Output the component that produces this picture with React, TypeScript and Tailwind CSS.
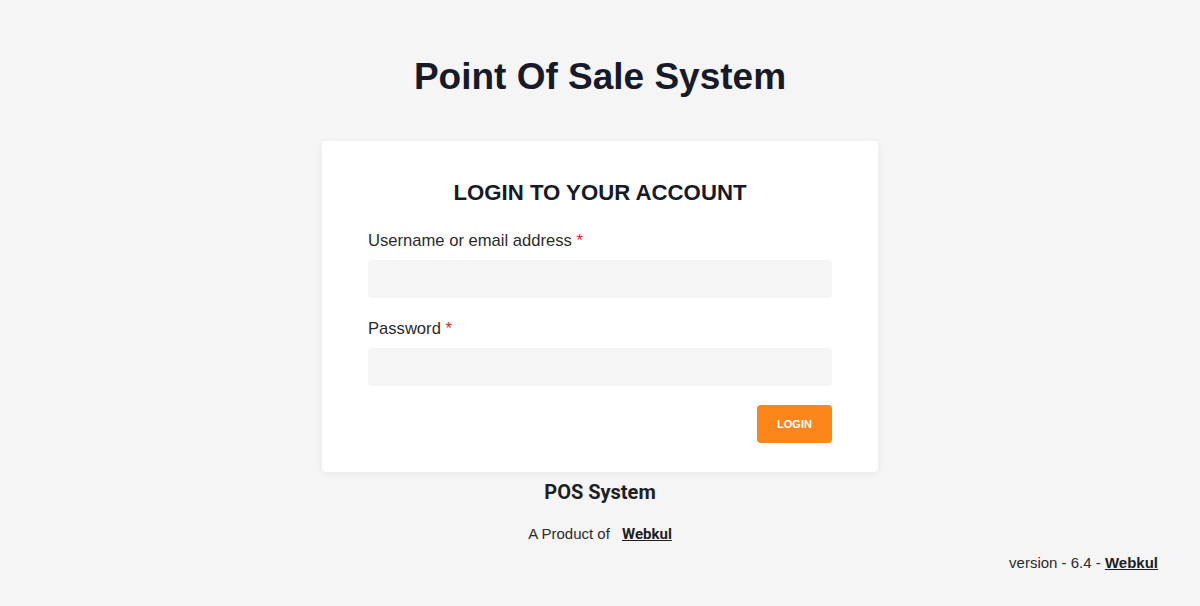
export default function App() {
  return (
    <div className="flex min-h-[606px] w-full flex-col bg-[#f5f5f5] font-['Liberation_Sans',Arial,sans-serif]">
      <div className="flex flex-col items-center">
        <h1 className="mt-[55px] text-[37px] font-bold leading-[44px] text-[#161a29]">
          Point Of Sale System
        </h1>

        <form
          className="mt-[42px] w-[556px] rounded-[4px] bg-white px-[46px] pb-[29px] pt-[38px] shadow-[0_2px_8px_rgba(0,0,0,0.06)]"
          onSubmit={(e) => e.preventDefault()}
        >
          <h2 className="text-center text-[22.2px] font-bold leading-[28px] text-[#161a29]">
            LOGIN TO YOUR ACCOUNT
          </h2>

          <label htmlFor="username" className="mt-[22px] block text-[16.6px] leading-[24px] text-[#2b2b2b]">
            Username or email address <span className="text-[#e02424]">*</span>
          </label>
          <input
            id="username"
            type="text"
            className="mt-[7px] block h-[38px] w-full rounded-[4px] bg-[#f5f5f5] px-3 text-[14px] outline-none"
          />

          <label htmlFor="password" className="mt-[19px] block text-[16.6px] leading-[24px] text-[#2b2b2b]">
            Password <span className="text-[#e02424]">*</span>
          </label>
          <input
            id="password"
            type="password"
            className="mt-[7px] block h-[38px] w-full rounded-[4px] bg-[#f5f5f5] px-3 text-[14px] outline-none"
          />

          <div className="mt-[19px] flex justify-end">
            <button
              type="submit"
              className="h-[38px] w-[75px] rounded-[4px] bg-[#fd861b] text-[11px] font-bold text-white"
            >
              LOGIN
            </button>
          </div>
        </form>

        <p className="mt-[6px] font-['Roboto',sans-serif] text-[20px] font-bold leading-[28px] text-[#1d1f24]">
          POS System
        </p>
        <p className="mt-[18px] text-[15px] leading-[20px] text-[#2b2b2b]">
          A Product of{' '}
          <a href="#" className="ml-[8px] font-['Roboto',sans-serif] font-bold text-[#1d1f24] underline">
            Webkul
          </a>
        </p>
      </div>

      <div className="mt-[9px] flex justify-end pr-[42px]">
        <p className="text-[15px] leading-[20px] text-[#2b2b2b]">
          version - 6.4 -{' '}
          <a href="#" className="font-bold text-[#1d1f24] underline">
            Webkul
          </a>
        </p>
      </div>
    </div>
  );
}
